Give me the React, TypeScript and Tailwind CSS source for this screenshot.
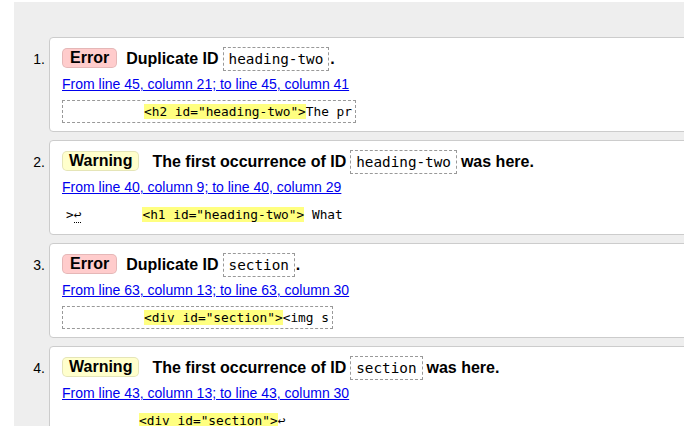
import React from 'react';

type Msg = {
  kind: 'error' | 'warning';
  before: string;
  code: string;
  after: string;
  link: string;
  boxed: boolean;
  lead?: React.ReactNode;
  spacer: string;
  mark: string;
  rest: React.ReactNode;
};

const messages: Msg[] = [
  {
    kind: 'error',
    before: 'Duplicate ID',
    code: 'heading-two',
    after: '.',
    link: 'From line 45, column 21; to line 45, column 41',
    boxed: true,
    spacer: 'w-[78px]',
    mark: '<h2 id="heading-two">',
    rest: 'The pr',
  },
  {
    kind: 'warning',
    before: 'The first occurrence of ID',
    code: 'heading-two',
    after: 'was here.',
    link: 'From line 40, column 9; to line 40, column 29',
    boxed: false,
    lead: (
      <>
        &gt;<span className="border-b border-dotted border-black">↩</span>
      </>
    ),
    spacer: 'w-[61px]',
    mark: '<h1 id="heading-two">',
    rest: ' What',
  },
  {
    kind: 'error',
    before: 'Duplicate ID',
    code: 'section',
    after: '.',
    link: 'From line 63, column 13; to line 63, column 30',
    boxed: true,
    spacer: 'w-[78px]',
    mark: '<div id="section">',
    rest: '<img s',
  },
  {
    kind: 'warning',
    before: 'The first occurrence of ID',
    code: 'section',
    after: 'was here.',
    link: 'From line 43, column 13; to line 43, column 30',
    boxed: false,
    spacer: 'w-[73px]',
    mark: '<div id="section">',
    rest: '↩',
  },
];

const mono = "font-['DejaVu_Sans_Mono',monospace]";

const Badge: React.FC<{ kind: Msg['kind'] }> = ({ kind }) =>
  kind === 'error' ? (
    <span className="mr-[9px] -mt-[2px] rounded-[5px] border border-black/10 bg-[#ffcccc] px-[7px] text-[16px] font-bold leading-[18px]">
      Error
    </span>
  ) : (
    <span className="mr-[13px] -mt-[2px] rounded-[5px] border border-black/10 bg-[#ffffcc] px-[6px] text-[16px] font-bold leading-[18px]">
      Warning
    </span>
  );

const Card: React.FC<{ msg: Msg; n: number }> = ({ msg, n }) => (
  <li className="flex">
    <div className="w-[35px] shrink-0 pt-[9px] pr-[4px] text-right text-[14px] leading-[26px]">
      {n}.
    </div>
    <div className="flex-1 rounded-[4px] border border-[#cccccc] bg-white px-[12px] pt-[8px] pb-[8px]">
      <p className="flex h-[26px] items-center whitespace-nowrap text-[16px] font-bold">
        <Badge kind={msg.kind} />
        <span>{msg.before}</span>
        <code
          className={`${mono} ml-[4px] border border-dashed border-[#999999] px-[5px] text-[14.3px] font-normal leading-[22px]`}
        >
          {msg.code}
        </code>
        <span className={msg.after === '.' ? 'ml-[1px]' : 'ml-[4px]'}>{msg.after}</span>
      </p>
      <p className="mt-[2px] text-[14px] leading-[20px]">
        <a href="#" className="text-[#0000ee] underline">
          {msg.link}
        </a>
      </p>
      <p
        className={`${mono} mt-[6px] inline-block whitespace-pre border px-[3px] py-[2px] text-[12.8px] leading-[17px] ${
          msg.boxed ? 'border-dashed border-[#999999]' : 'border-transparent'
        }`}
      >
        {msg.lead}
        <span className={`inline-block ${msg.spacer}`} />
        <mark className="bg-[#ffff80] text-black">{msg.mark}</mark>
        {msg.rest}
      </p>
    </div>
  </li>
);

export default function App() {
  return (
    <div className="h-[426px] w-[684px] overflow-hidden bg-white font-['Liberation_Sans',Arial,sans-serif] text-black">
      <div className="ml-[14px] mt-[2px] w-[720px] bg-[#eeeeee] pt-[35px] pb-[20px]">
        <ol className="flex flex-col gap-[8px]">
          {messages.map((m, i) => (
            <Card key={i} msg={m} n={i + 1} />
          ))}
        </ol>
      </div>
    </div>
  );
}
